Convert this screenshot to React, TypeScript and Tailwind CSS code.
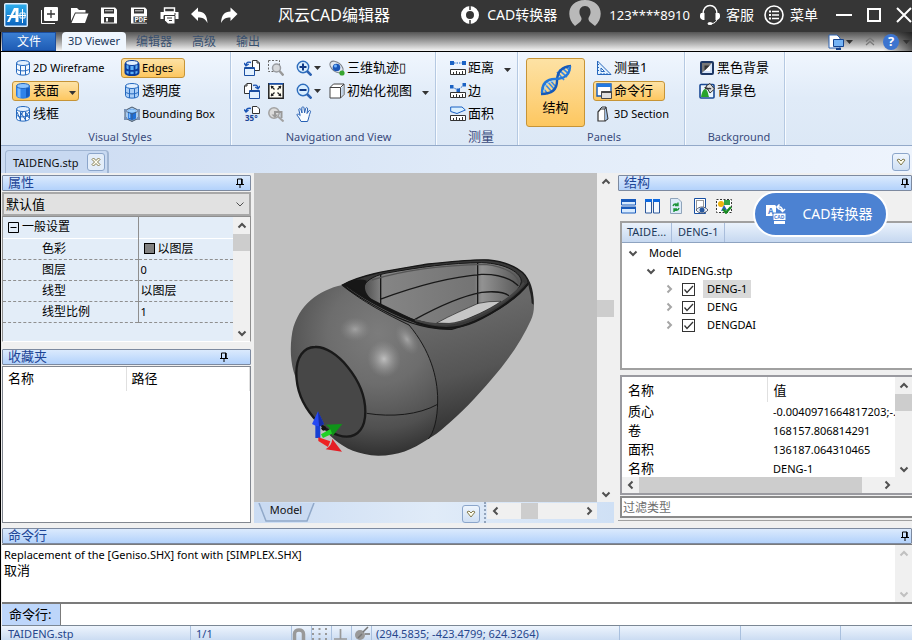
import { useState } from 'react';
import type { ReactNode } from 'react';
import clsx from 'clsx';

type Dir = 'up' | 'down' | 'left' | 'right';

const chevrons: Record<Dir, string> = {
    up: 'M1.5 6.5 L5 3 L8.5 6.5',
    down: 'M1.5 3.5 L5 7 L8.5 3.5',
    left: 'M6.5 1.5 L3 5 L6.5 8.5',
    right: 'M3.5 1.5 L7 5 L3.5 8.5',
};

function Chevron({ dir, color = '#505050', width = 2 }: { dir: Dir; color?: string; width?: number }) {
    return (
        <svg width="10" height="10" viewBox="0 0 10 10" className="shrink-0">
            <path d={chevrons[dir]} fill="none" stroke={color} strokeWidth={width} />
        </svg>
    );
}

function Caret() {
    return (
        <svg width="7" height="4" viewBox="0 0 7 4" className="shrink-0">
            <path d="M0 0 H7 L3.5 4 Z" fill="#333" />
        </svg>
    );
}

function Icon({ children, size = 16 }: { children: ReactNode; size?: number }) {
    return (
        <svg width={size} height={size} viewBox="0 0 16 16" fill="none" className="shrink-0">
            {children}
        </svg>
    );
}

/* ---------- ribbon icons ---------- */

function Cylinder({ kind }: { kind: 'wire' | 'solid' | 'mesh' | 'edges' | 'glass' }) {
    const stroke = kind === 'edges' ? '#0a3c9c' : '#2468be';
    const fill = { wire: '#f4f9ff', solid: '#2f83ea', mesh: '#f4f9ff', edges: '#5fb0f8', glass: '#a9cdf6' }[kind];
    return (
        <Icon>
            <path d="M1.5 3.5 V12.5 C1.5 16 14.5 16 14.5 12.5 V3.5 Z" fill={fill} stroke={kind === 'solid' ? '#2a7be0' : stroke} />
            {kind === 'solid' && <path d="M2.5 5 H5.5 V15 L2.5 13.8 Z" fill="#7dbcff" />}
            {kind === 'solid' && <path d="M11 5 H14.5 V13 L11 14.8 Z" fill="#155bc0" />}
            <ellipse cx="8" cy="3" rx="6.5" ry="2.5" fill={kind === 'solid' ? '#8cc4ff' : '#e2f0ff'} stroke={stroke} />
            {kind !== 'solid' && <path d="M5.5 5.5 V15 M10.5 5.5 V15 M1.5 9 C4 11.5 12 11.5 14.5 9" stroke={stroke} strokeWidth={kind === 'edges' ? 1.8 : 1} />}
            {kind === 'mesh' && <path d="M2 6 L5.5 14 M5.5 6 L10.5 14 M10.5 6 L14 12 M5.5 10 L8 6 M10.5 11 L14 6" stroke={stroke} />}
            {kind === 'edges' && <path d="M1.5 3.5 V12.5 C1.5 16 14.5 16 14.5 12.5 V3.5" stroke={stroke} strokeWidth="2" />}
        </Icon>
    );
}

function BoundingBoxIcon() {
    return (
        <Icon>
            <path d="M1 4.5 L8 1 L15 4.5 V12 L8 15.5 L1 12 Z" fill="#a7caee" stroke="#47576a" />
            <path d="M4 5 C4 2.5 12 2.5 12 5 V12 C12 14.5 4 14.5 4 12 Z" fill="#1f70d8" />
            <ellipse cx="8" cy="5" rx="4" ry="1.7" fill="#9cd0ff" />
            <path d="M5.5 7 V12" stroke="#84bfff" strokeWidth="1.5" />
            <path d="M1 5 L8 8 L15 5 M8 8 V15" stroke="#47576a" strokeWidth=".7" />
            <path d="M0 3 h3 v3 H0z M13 3 h3 v3 h-3z M0 11 h3 v3 H0z M13 11 h3 v3 h-3z" fill="#7891b4" />
        </Icon>
    );
}

function RotateIcon({ kind }: { kind: 'left' | 'right' | 'angle' }) {
    if (kind === 'angle') {
        return (
            <Icon>
                <path d="M8.5 .5 H13 L15.5 3 V7.5 H8.5 Z" fill="#fff" stroke="#333" />
                <path d="M7 2.5 C4 1.5 2 3 2 5.5 M0 3.5 L2 6 L4.5 4" stroke="#1b55b5" strokeWidth="1.4" />
                <text x="1" y="15" fontSize="8" fontWeight="700" fill="#1d4698">35°</text>
            </Icon>
        );
    }
    return (
        <Icon>
            <g transform={kind === 'right' ? 'matrix(-1 0 0 1 16 0)' : undefined}>
                <path d="M8.5 .5 H13 L15.5 3 V10.5 H8.5 Z" fill="#fff" stroke="#333" />
                <path d="M13 .5 V3 H15.5" stroke="#333" />
                <path d="M.5 7.5 H10.5 V15.5 H.5 Z" fill="#e3f1ff" stroke="#1b4fa2" />
                <path d="M.5 8.5 H10.5" stroke="#1b4fa2" />
                <path d="M7 2.5 C4 1.5 2.5 2.5 2 5 M0 3 L2 5.8 L4.8 4" stroke="#1b55b5" strokeWidth="1.4" />
            </g>
        </Icon>
    );
}

function ZoomIcon({ kind }: { kind: 'in' | 'out' | 'window' | 'previous' }) {
    if (kind === 'window') {
        return (
            <Icon>
                <path d="M.5 .5 H11.5 V11.5 H.5 Z" stroke="#666" strokeDasharray="2 1.5" />
                <circle cx="8.5" cy="8" r="4" fill="#d5d7da" stroke="#9a9da2" strokeWidth="1.5" />
                <path d="M11.5 11 L15.5 15.5" stroke="#999" strokeWidth="2.4" />
            </Icon>
        );
    }
    if (kind === 'previous') {
        return (
            <Icon>
                <circle cx="6" cy="7" r="5.2" fill="#dcdcdc" stroke="#a2a2a2" strokeWidth="1.5" />
                <path d="M7 11 V6 H13.5 V12" stroke="#999" strokeWidth="2" />
                <path d="M3.5 8.5 H10 L7 12 Z" fill="#999" />
                <path d="M10 10.5 L15.5 15.5" stroke="#a2a2a2" strokeWidth="2" />
            </Icon>
        );
    }
    return (
        <Icon>
            <circle cx="7" cy="7" r="5.7" fill="#d9eeff" stroke="#2e6dbd" strokeWidth="1.4" />
            <path d={kind === 'in' ? 'M3.5 7 H10.5 M7 3.5 V10.5' : 'M3.5 7 H10.5'} stroke="#123a85" strokeWidth="2" />
            <path d="M11 11 L15.5 15.5" stroke="#2c62b2" strokeWidth="2.6" />
        </Icon>
    );
}

function ExtentsIcon() {
    return (
        <Icon>
            <path d="M.8 .8 H15.2 V15.2 H.8 Z" fill="#fffdf2" stroke="#222" strokeWidth="1.5" />
            <path d="M.8 .8 H15.2" stroke="#1b55b5" strokeWidth="1.5" />
            <path d="M3 3 L6.5 6.5 M13 3 L9.5 6.5 M3 13 L6.5 9.5 M13 13 L9.5 9.5" stroke="#222" strokeWidth="1.3" />
            <path d="M3 3 H6 L3 6 Z M13 3 H10 L13 6 Z M3 13 H6 L3 10 Z M13 13 H10 L13 10 Z" fill="#222" />
        </Icon>
    );
}

function HandIcon() {
    return (
        <Icon>
            <path
                d="M5 15.5 C4 13 2.5 11 .8 8.8 C1.3 7.4 3 8.2 4.2 9.6 L2.8 3.6 C3 2.3 4.6 2.4 5 3.7 L6 7 L5.8 1.8 C6.2 .4 7.8 .5 8 1.8 L8.6 6.8 L9.7 2.3 C10.3 1.1 11.8 1.6 11.6 3 L11 7.5 L12.8 4.9 C13.8 4 15 4.9 14.4 6.2 C13 9.2 13 12 11.5 15.5 Z"
                fill="#f8fcff"
                stroke="#2861b4"
            />
        </Icon>
    );
}

function OrbitIcon() {
    return (
        <Icon>
            <ellipse cx="7.5" cy="7" rx="7.5" ry="4.6" transform="rotate(38 7.5 7)" fill="#dfe6ef" stroke="#7a7f88" />
            <circle cx="7.5" cy="7.5" r="3.8" fill="#1a56b6" />
            <circle cx="6.5" cy="6" r="1.5" fill="#6fb4ff" />
            <circle cx="13" cy="13" r="2.6" fill="#37a52f" />
        </Icon>
    );
}

function CubeIcon() {
    return (
        <Icon>
            <path d="M1 4.5 L4.5 1 H15 V11.5 L11.5 15 H1 Z" fill="#fff" stroke="#444" />
            <path d="M1 4.5 H11.5 V15 M11.5 4.5 L15 1" stroke="#444" />
            <path d="M12.2 5 L14.5 2.5 V11 L12.2 13.5 Z" fill="#bcd0e6" />
        </Icon>
    );
}

function MeasureIcon({ kind }: { kind: 'distance' | 'edge' | 'area' }) {
    return (
        <Icon>
            <path d="M.5 9.5 H15.5 V14.5 H.5 Z" fill="#fff" stroke="#333" />
            <path d="M3.5 12 V14 M6.5 11 V14 M9.5 12 V14 M12.5 11 V14" stroke="#333" />
            {kind === 'distance' && <path d="M0 1 h4 v4 H0z M12 1 h4 v4 h-4z" fill="#1b62c4" />}
            {kind === 'distance' && <path d="M4 3 H12" stroke="#1b62c4" strokeDasharray="1.5 1" />}
            {kind === 'edge' && <path d="M0 2 h3.5 v3.5 H0z M6.5 5.5 H10 V9 H6.5z M12.5 0 H16 V3.5 h-3.5z" fill="#1b62c4" />}
            {kind === 'edge' && <path d="M2 4 L8 7 L14 2" stroke="#1b62c4" strokeDasharray="1.5 1.2" />}
            {kind === 'area' && <path d="M.7 1 H12 L15.3 4 L7 7.5 L.7 5.5 Z" fill="#d9efff" stroke="#1b62c4" />}
        </Icon>
    );
}

function DnaIcon() {
    return (
        <svg width="32" height="32" viewBox="0 0 32 32" fill="none">
            <path d="M4 19 L12 28 M7 17 L15 26 M10 16 L16 23 M17 8 L24 16 M19 6 L27 13 M22 4 L29 10 M2 23 L8 30 M26 3 L30 7" stroke="#3c8ce6" strokeWidth="1.7" />
            <path d="M1 30 C14 30 17 24 17 17 C17 9 20 3 31 2" stroke="#1559b8" strokeWidth="2.4" />
            <path d="M2 29 C2 17 9 15 15 15 C24 15 30 11 30 2" stroke="#2378da" strokeWidth="2.4" />
            <path d="M4 27 C5 19 10 17 15 17" stroke="#9bd3ff" />
        </svg>
    );
}

function RulerTriangleIcon() {
    return (
        <Icon>
            <path d="M1.5 1 V14.5 H15 Z" fill="#e1f1ff" stroke="#2767bc" />
            <path d="M5 8 V11.5 H8.5 Z" fill="#fff" stroke="#2767bc" />
            <path d="M1.5 4.5 H3 M1.5 7.5 H3 M1.5 10.5 H3 M5 14.5 V13 M8 14.5 V13 M11 14.5 V13" stroke="#2767bc" />
        </Icon>
    );
}

function CommandIcon() {
    return (
        <Icon>
            <path d="M1 1 H15 V13 H1 Z" fill="#fff" stroke="#1559b4" strokeWidth="1.4" />
            <path d="M1 1 H15 V4 H1 Z" fill="#2279e2" />
            <path d="M5.5 8.5 H15.5 V15.5 H5.5 Z" fill="#dedede" stroke="#474747" />
            <path d="M5.5 9 H15.5" stroke="#474747" strokeWidth="2" />
        </Icon>
    );
}

function SectionIcon() {
    return (
        <Icon>
            <path d="M2 6 L4.5 3 H9 V15 H2 Z" fill="#fff" stroke="#333" strokeWidth="1.2" />
            <path d="M9 3 L10 1 L12 13 L9 15" fill="#9ebce0" stroke="#333" />
            <path d="M4 3 L6 1 H10" stroke="#333" />
        </Icon>
    );
}

function BlackBackgroundIcon() {
    return (
        <Icon>
            <rect x="2" y="2" width="12" height="12" rx="1" fill="#d5e4fa" stroke="#1d3764" strokeWidth="2" />
            <path d="M3 3 H13 L3 13 Z" fill="#777" />
            <path d="M5.5 5.5 H11 L5.5 11 Z" fill="#333" />
            <path d="M11 5.5 V11 H5.5 Z" fill="#fff" />
        </Icon>
    );
}

function BackgroundColorIcon() {
    return (
        <Icon>
            <rect x="1" y="1.5" width="14" height="13.5" rx="1" fill="#eaf5ff" stroke="#1a4994" strokeWidth="1.6" />
            <path d="M2 14 C3 8 5 6 6 6 C9 7 9 11 10 14 Z" fill="#28a32c" />
            <path d="M7 3 L11 .5 L15.5 6 L11 10 Z" fill="#ddd" stroke="#333" />
            <path d="M6 4 C7 8 10 4 12 6" stroke="#333" strokeWidth="1.5" />
        </Icon>
    );
}

/* ---------- title bar icons ---------- */

function LogoIcon() {
    return (
        <svg width="24" height="24" viewBox="0 0 24 24" fill="none" className="shrink-0">
            <defs>
                <linearGradient id="logo" x1="0" y1="0" x2="0" y2="1">
                    <stop offset="0" stopColor="#2fb0ee" />
                    <stop offset="1" stopColor="#0a62bd" />
                </linearGradient>
            </defs>
            <rect x=".7" y=".7" width="22.6" height="22.6" rx="1" fill="url(#logo)" stroke="#dcecfb" strokeWidth="1.4" />
            <path d="M3 19 L10 5 H14.5 V19 H11.5 V15 H7.5 L5.5 19 Z M9 12 H11.5 V7.5 Z" fill="#fff" fillRule="evenodd" />
            <path d="M18.5 6 V20 M3 12.5 H22 M16 10 H21 V15 H16 Z" stroke="#fff" />
        </svg>
    );
}

const quickActions: { label: string; icon: ReactNode }[] = [
    {
        label: '新建',
        icon: (
            <>
                <rect x="4" y="1" width="14" height="14" rx="1" fill="#fff" />
                <path d="M1.5 4 V17.5 H15" stroke="#fff" />
                <path d="M11 4 V12 M7 8 H15" stroke="#363636" strokeWidth="1.3" />
            </>
        ),
    },
    {
        label: '打开',
        icon: (
            <>
                <path d="M1 15 V2 H7 L9 4 H15.5 V6.5 H5 Z" fill="#fff" />
                <path d="M5.5 7.5 H18.5 L15 17 H1.5 Z" fill="#fff" />
            </>
        ),
    },
    {
        label: '保存',
        icon: (
            <>
                <path d="M1 1.5 H15 L17 3.5 V17.5 H1 Z" fill="#fff" />
                <path d="M4 3 H14 V7.5 H4 Z M4 11 H14 V16.5 H4 Z" fill="#363636" />
                <path d="M5 4.8 H13" stroke="#fff" strokeWidth=".8" />
                <path d="M6 12 H8 V15.5 H6 Z" fill="#fff" />
            </>
        ),
    },
    {
        label: '导出 PDF',
        icon: (
            <>
                <path d="M1 1.5 H15 L17 3.5 V17.5 H1 Z" fill="#fff" />
                <path d="M4 3 H14 V7.5 H4 Z M3.5 10.5 H18 V16.8 H3.5 Z" fill="#363636" />
                <path d="M5 4.8 H13" stroke="#fff" strokeWidth=".8" />
                <text x="4.5" y="16.2" fontSize="7" fontWeight="700" fill="#fff" fontFamily="Liberation Mono">PDF</text>
            </>
        ),
    },
    {
        label: '打印',
        icon: (
            <>
                <path d="M4.5 2 H14.5 V6 H4.5 Z" stroke="#fff" strokeWidth="1.4" />
                <path d="M.5 6 H18.5 V13 H15.5 V9.5 H3.5 V13 H.5 Z" fill="#fff" />
                <path d="M5 10 H14.5 V17.5 H8 L5 14.5 Z" fill="#fff" />
                <path d="M14 8 H16 M4 9.5 H15" stroke="#363636" />
                <path d="M7 12 H12 M9 14.5 H12" stroke="#363636" />
            </>
        ),
    },
    { label: '撤销', icon: <path d="M1 8 L8 1.5 V5.5 C14 5.5 17 9 17.5 17 C15 12.5 12.5 11.5 8 11.5 V15 Z" fill="#fff" /> },
    { label: '重做', icon: <path d="M17.5 8 L10.5 1.5 V5.5 C4.5 5.5 1.5 9 1 17 C3.5 12.5 6 11.5 10.5 11.5 V15 Z" fill="#fff" /> },
];

function TitleBar() {
    return (
        <header className="flex h-8 shrink-0 items-center bg-[#363636] pb-0.5 pl-1 text-white">
            <LogoIcon />
            <div className="flex pl-1.5">
                {quickActions.map((action) => (
                    <button key={action.label} aria-label={action.label} className="flex h-7 w-[30px] items-center justify-center">
                        <svg width="19" height="19" viewBox="0 0 19 19" fill="none">
                            {action.icon}
                        </svg>
                    </button>
                ))}
            </div>
            <h1 className="ml-[34px] whitespace-nowrap text-base">风云CAD编辑器</h1>
            <div className="ml-auto flex h-full items-center whitespace-nowrap text-sm">
                <button className="flex items-center gap-2">
                    <svg width="18" height="18" viewBox="0 0 18 18" fill="none">
                        <circle cx="9" cy="9" r="6.5" stroke="#fff" strokeWidth="5" />
                        <path d="M9 0 V4 M9 14 V18" stroke="#363636" strokeWidth="1.5" />
                    </svg>
                    CAD转换器
                </button>
                <button className="ml-3 flex h-full items-center gap-2 text-[13px]">
                    <svg width="32" height="28" viewBox="0 0 32 28" fill="none" className="self-start">
                        <path d="M6 26 L11 22 C13 20 13 18 11.5 16 C9.5 13 10 6 16 6 C22 6 22.5 13 20.5 16 C19 18 19 20 21 22 L26 26 C36 17 33 0 16 0 C-1 0 -4 17 6 26 Z" fill="#b9b9b9" />
                    </svg>
                    123****8910
                </button>
                <button className="ml-2.5 flex items-center gap-1.5">
                    <svg width="20" height="22" viewBox="0 0 20 22" fill="none">
                        <path d="M3 10 C3 -1.5 17 -1.5 17 10" stroke="#fff" strokeWidth="1.5" />
                        <path d="M1 9 H4.5 V16 C1 16 0 14 0 12.5 C0 11 0 10 1 9 Z M19 9 H15.5 V16 C19 16 20 14 20 12.5 C20 11 20 10 19 9 Z" fill="#fff" />
                        <path d="M17 15 C16.5 18 14 19.5 11.5 19.5" stroke="#fff" />
                        <ellipse cx="10" cy="19.5" rx="2.5" ry="1.5" fill="#fff" />
                    </svg>
                    客服
                </button>
                <button className="ml-2.5 flex items-center gap-1.5">
                    <svg width="20" height="20" viewBox="0 0 20 20" fill="none">
                        <circle cx="10" cy="10" r="9" stroke="#fff" strokeWidth="1.6" />
                        <path d="M8 6.5 H15 M8 10 H15 M8 13.5 H15" stroke="#fff" strokeWidth="1.6" />
                        <path d="M5 6.5 H7 M5 10 H7 M5 13.5 H7" stroke="#fff" strokeWidth="2" />
                    </svg>
                    菜单
                </button>
                <button aria-label="最小化" className="ml-[18px]">
                    <svg width="16" height="16" viewBox="0 0 16 16"><path d="M0 7 H16 V9 H0 Z" fill="#fff" /></svg>
                </button>
                <button aria-label="最大化" className="ml-3.5">
                    <svg width="16" height="16" viewBox="0 0 16 16"><rect x="2" y="2" width="12" height="12" fill="none" stroke="#fff" strokeWidth="2" /></svg>
                </button>
                <button aria-label="关闭" className="ml-3.5">
                    <svg width="16" height="16" viewBox="0 0 16 16"><path d="M1 1 L15 15 M15 1 L1 15" stroke="#fff" strokeWidth="2" /></svg>
                </button>
            </div>
        </header>
    );
}

function RibbonTabs() {
    return (
        <nav className="flex h-5 shrink-0 items-stretch border-b border-black bg-gradient-to-b from-[#555] to-[#f6f6f6] pl-px text-xs">
            <button className="w-[54px] border border-[#1c4d9c] bg-gradient-to-b from-[#3b7fd2] to-[#1f5cb5] text-xs leading-4 text-white">文件</button>
            <button className="ml-1.5 rounded-t-sm bg-[#eff6fe] px-1.5 text-[11px] text-[#1e395b]">3D Viewer</button>
            {['编辑器', '高级', '输出'].map((tab) => (
                <button key={tab} className="mx-2.5 text-[#39506f]">{tab}</button>
            ))}
            <div className="ml-auto flex items-center">
                <button aria-label="界面样式" className="flex items-center gap-0.5">
                    <Icon>
                        <path d="M1 1 H9 L12 4 V14 H1 Z" fill="#fff" stroke="#2c62b2" />
                        <path d="M5.5 5.5 H15.5 V12.5 H5.5 Z" fill="#75b4f6" stroke="#15448e" />
                        <path d="M8 15 H13" stroke="#15448e" strokeWidth="2" />
                    </Icon>
                    <Caret />
                </button>
                <button aria-label="折叠功能区" className="ml-3">
                    <svg width="10" height="9" viewBox="0 0 10 9" fill="none">
                        <path d="M1 4.5 L5 1 L9 4.5 M1 8 L5 4.5 L9 8" stroke="#777" strokeWidth="1.2" />
                    </svg>
                </button>
                <button aria-label="帮助" className="ml-2 flex items-center gap-1 self-stretch bg-gradient-to-r from-transparent to-black/60 pr-0.5">
                    <span className="flex size-4 items-center justify-center rounded-full bg-[#3c74cf] text-[13px] font-bold text-white">?</span>
                    <Caret />
                </button>
            </div>
        </nav>
    );
}

/* ---------- ribbon ---------- */

const activeButton = 'border-[#c69437] bg-gradient-to-b from-[#fde2a4] to-[#fdc75f]';

type RibbonButtonProps = { icon: ReactNode; label: string; active?: boolean; caret?: boolean; className?: string };

function RibbonButton({ icon, label, active, caret, className }: RibbonButtonProps) {
    return (
        <button className={clsx('flex h-5 items-center gap-0.5 whitespace-nowrap rounded-[3px] border px-0.5 text-black', active ? activeButton : 'border-transparent', className)}>
            {icon}
            <span className={/^[\x00-\x7f]+$/.test(label) ? 'text-[11px]' : 'text-[13px]'}>{label}</span>
            {caret && <span className="ml-2 mt-1"><Caret /></span>}
        </button>
    );
}

function ToolButton({ icon, label, caret }: { icon: ReactNode; label: string; caret?: boolean }) {
    return (
        <button aria-label={label} className="flex h-5 items-center gap-0.5">
            {icon}
            {caret && <Caret />}
        </button>
    );
}

function RibbonGroup({ label, className, children }: { label: string; className: string; children: ReactNode }) {
    return (
        <section className={clsx('flex shrink-0 flex-col border-r border-[#b5c9e2] shadow-[1px_0_0_#f8fbff]', className)}>
            <div className="flex grow items-start pt-1.5">{children}</div>
            <h2 className="flex h-[18px] items-center justify-center pr-0.5 pt-0.5 text-[11px] text-[#3a4b7c]">
                <span className={label === '测量' ? 'text-[13px]' : ''}>{label}</span>
            </h2>
        </section>
    );
}

const column = 'flex flex-col items-start gap-[3px]';

function Ribbon() {
    return (
        <div className="flex h-[94px] shrink-0 border-b border-[#93a9c9] bg-gradient-to-b from-[#f0f6fe] via-[#e0ebf8] to-[#dce8f6]">
            <RibbonGroup label="Visual Styles" className="w-[230px] pl-[11px]">
                <div className={clsx(column, 'w-[109px]')}>
                    <RibbonButton icon={<Cylinder kind="wire" />} label="2D Wireframe" />
                    <RibbonButton icon={<Cylinder kind="solid" />} label="表面" active caret />
                    <RibbonButton icon={<Cylinder kind="mesh" />} label="线框" />
                </div>
                <div className={column}>
                    <RibbonButton icon={<Cylinder kind="edges" />} label="Edges" active className="w-16" />
                    <RibbonButton icon={<Cylinder kind="glass" />} label="透明度" />
                    <RibbonButton icon={<BoundingBoxIcon />} label="Bounding Box" />
                </div>
            </RibbonGroup>
            <RibbonGroup label="Navigation and View" className="w-[205px] pl-[13px]">
                <div className={clsx(column, 'w-6')}>
                    <ToolButton icon={<RotateIcon kind="left" />} label="向左旋转" />
                    <ToolButton icon={<RotateIcon kind="right" />} label="向右旋转" />
                    <ToolButton icon={<RotateIcon kind="angle" />} label="旋转角度" />
                </div>
                <div className={clsx(column, 'w-7')}>
                    <ToolButton icon={<ZoomIcon kind="window" />} label="窗口缩放" />
                    <ToolButton icon={<ExtentsIcon />} label="适合窗口" />
                    <ToolButton icon={<ZoomIcon kind="previous" />} label="上一视图" />
                </div>
                <div className={clsx(column, 'w-[30px]')}>
                    <ToolButton icon={<ZoomIcon kind="in" />} label="放大" caret />
                    <ToolButton icon={<ZoomIcon kind="out" />} label="缩小" caret />
                    <ToolButton icon={<HandIcon />} label="平移" />
                </div>
                <div className={column}>
                    <RibbonButton icon={<OrbitIcon />} label="三维轨迹▯" />
                    <RibbonButton icon={<CubeIcon />} label="初始化视图" caret />
                </div>
            </RibbonGroup>
            <RibbonGroup label="测量" className="w-[82px] pl-[11px]">
                <div className={column}>
                    <RibbonButton icon={<MeasureIcon kind="distance" />} label="距离" caret />
                    <RibbonButton icon={<MeasureIcon kind="edge" />} label="边" />
                    <RibbonButton icon={<MeasureIcon kind="area" />} label="面积" />
                </div>
            </RibbonGroup>
            <RibbonGroup label="Panels" className="w-[167px] pl-2">
                <button className={clsx('mr-2 flex h-[69px] w-[59px] flex-col items-center justify-center gap-0.5 rounded-[3px] border pb-1 text-[13px]', activeButton)}>
                    <DnaIcon />
                    结构
                </button>
                <div className={column}>
                    <RibbonButton icon={<RulerTriangleIcon />} label="测量1" />
                    <RibbonButton icon={<CommandIcon />} label="命令行" active className="w-[72px]" />
                    <RibbonButton icon={<SectionIcon />} label="3D Section" />
                </div>
            </RibbonGroup>
            <RibbonGroup label="Background" className="w-[100px] pl-[11px]">
                <div className={column}>
                    <RibbonButton icon={<BlackBackgroundIcon />} label="黑色背景" />
                    <RibbonButton icon={<BackgroundColorIcon />} label="背景色" />
                </div>
            </RibbonGroup>
        </div>
    );
}

function DropButton({ label }: { label: string }) {
    return (
        <button aria-label={label} className="flex size-[18px] items-center justify-center rounded-[3px] border border-[#8ba5ca] bg-gradient-to-b from-[#eef5fd] to-[#cfdff3]">
            <svg width="10" height="8" viewBox="0 0 10 8" fill="none">
                <path d="M1 2 L3 1 L5 3 L7 1 L9 2 L5 7 Z" fill="#fffef0" stroke="#837b50" />
            </svg>
        </button>
    );
}

function DocumentTabs() {
    return (
        <div className="flex h-[27px] shrink-0 items-center justify-between bg-gradient-to-r from-[#cbdbf2] via-[#dfeaf8] to-[#eef4fd] pl-1 pr-0.5 pt-1">
            <div className="flex h-[23px] items-center gap-2 rounded-t-sm border border-b-0 border-r-2 border-[#a1b6d3] bg-[#c8d9f1] pl-[7px] pr-0.5">
                <button className="pt-0.5 text-[11px] text-[#111]">TAIDENG.stp</button>
                <button aria-label="关闭文档" className="flex size-[18px] items-center justify-center rounded-[3px] border border-[#8ba5ca] bg-[#e3edf9]">
                    <svg width="10" height="10" viewBox="0 0 10 10" fill="none">
                        <path d="M1 2.5 L2.5 1 L5 3.5 L7.5 1 L9 2.5 L6.5 5 L9 7.5 L7.5 9 L5 6.5 L2.5 9 L1 7.5 L3.5 5 Z" fill="#fffef0" stroke="#837b50" />
                    </svg>
                </button>
            </div>
            <DropButton label="文档列表" />
        </div>
    );
}

/* ---------- shared panel parts ---------- */

function PanelHeader({ title, pinClass = 'mr-1.5' }: { title: string; pinClass?: string }) {
    return (
        <div className="flex h-4 shrink-0 items-center justify-between rounded-[1px] border border-[#7d8aa0] bg-gradient-to-b from-[#dbeafd] to-[#b3d2fb] pl-[5px]">
            <h2 className="pb-0.5 text-[13px] leading-[14px] text-[#1d4596]">{title}</h2>
            <button aria-label={`固定${title}`} className={pinClass}>
                <svg width="8" height="10" viewBox="0 0 8 10" fill="none">
                    <path d="M1.5 6 V1 H6 V6 M0 6.5 H8 M4 6 V10" stroke="#000" />
                    <path d="M5 1 V6 H6.5 V1 Z" fill="#000" />
                </svg>
            </button>
        </div>
    );
}

function ScrollBar({ horizontal, before, size, color }: { horizontal?: boolean; before?: string; size?: string; color?: string }) {
    return (
        <div className={clsx('flex shrink-0 bg-[#f0f0f0]', horizontal ? 'h-4' : 'w-[17px] flex-col')}>
            <button aria-label={horizontal ? '向左滚动' : '向上滚动'} className={clsx('flex shrink-0 items-center justify-center', horizontal ? 'w-[17px]' : 'h-[17px]')}>
                <Chevron dir={horizontal ? 'left' : 'up'} color={color} />
            </button>
            <div className={clsx('flex min-h-0 min-w-0 grow', !horizontal && 'flex-col')}>
                <div className={before} />
                {size && <div className={clsx('bg-[#cdcdcd]', size)} />}
            </div>
            <button aria-label={horizontal ? '向右滚动' : '向下滚动'} className={clsx('flex shrink-0 items-center justify-center', horizontal ? 'w-[17px]' : 'h-[17px]')}>
                <Chevron dir={horizontal ? 'right' : 'down'} color={color} />
            </button>
        </div>
    );
}

/* ---------- left column ---------- */

const properties = [
    { name: '色彩', value: '以图层', swatch: true },
    { name: '图层', value: '0' },
    { name: '线型', value: '以图层' },
    { name: '线型比例', value: '1' },
];

function PropertiesPanel() {
    return (
        <section className="flex shrink-0 flex-col">
            <PanelHeader title="属性" />
            <div className="mt-px grid h-6 items-center border-2 border-[#a8a8a8] bg-[#e1e1e1]">
                <select aria-label="选择对象" className="col-start-1 row-start-1 h-5 w-full appearance-none pl-0.5 text-[13px] leading-[19px]">
                    <option>默认值</option>
                </select>
                <span className="pointer-events-none col-start-1 row-start-1 mr-1 justify-self-end">
                    <Chevron dir="down" width={1} />
                </span>
            </div>
            <div className="flex h-[126px] border border-[#8f8f8f] border-b-white bg-[#e3edf8]">
                <div className="grow">
                    <table className="w-full table-fixed border-collapse text-xs leading-4">
                        <colgroup>
                            <col className="w-[135px]" />
                            <col />
                        </colgroup>
                        <tbody>
                            <tr className="h-[21px] border-b border-white">
                                <th className="border-r border-[#8f8f8f] p-0 text-left font-normal">
                                    <button className="flex items-center gap-[3px] pl-[5px]">
                                        <svg width="11" height="11" viewBox="0 0 11 11" fill="none">
                                            <path d="M.5 .5 H10.5 V10.5 H.5 Z M2.5 5.5 H8.5" stroke="#000" />
                                        </svg>
                                        一般设置
                                    </button>
                                </th>
                                <td />
                            </tr>
                            {properties.map((p) => (
                                <tr key={p.name} className="h-[21px] border-b border-dashed border-[#8f8f8f]">
                                    <th className="border-r border-solid border-[#8f8f8f] py-0 pl-[39px] pr-0 text-left font-normal">{p.name}</th>
                                    <td className="py-0 pl-0.5">
                                        <span className={clsx('flex items-center gap-[3px]', /^\d+$/.test(p.value) && 'text-[11px]')}>
                                            {p.swatch && <span className="ml-[3px] size-[11px] border border-black bg-[#808080]" />}
                                            {p.value}
                                        </span>
                                    </td>
                                </tr>
                            ))}
                        </tbody>
                    </table>
                </div>
                <ScrollBar size="h-[17px]" />
            </div>
        </section>
    );
}

function FavoritesPanel() {
    return (
        <section className="mt-[7px] flex min-h-0 grow flex-col">
            <PanelHeader title="收藏夹" pinClass="mr-[22px]" />
            <div className="mt-px grow border border-[#828790] bg-white">
                <table className="w-full table-fixed text-[13px] leading-4">
                    <thead>
                        <tr className="h-6">
                            <th className="w-[123px] border-r border-[#e0e0e0] p-0 pb-0.5 pl-[5px] text-left font-normal">名称</th>
                            <th className="border-r border-[#e0e0e0] p-0 pb-0.5 pl-[5px] text-left font-normal">路径</th>
                        </tr>
                    </thead>
                </table>
            </div>
        </section>
    );
}

/* ---------- drawing area ---------- */

function LampModel() {
    return (
        <svg viewBox="0 0 1029 987" className="min-h-0 w-full grow bg-[#c0c0c0]" fill="none" role="img" aria-label="TAIDENG.stp">
            <defs>
                <linearGradient id="body" x1="600" y1="230" x2="690" y2="560" gradientUnits="userSpaceOnUse">
                    <stop offset="0" stopColor="#686868" />
                    <stop offset=".5" stopColor="#555" />
                    <stop offset="1" stopColor="#303030" />
                </linearGradient>
                <radialGradient id="ball" cx="370" cy="280" r="380" gradientUnits="userSpaceOnUse">
                    <stop offset="0" stopColor="#7c7c7c" />
                    <stop offset=".4" stopColor="#6d6d6d" />
                    <stop offset=".75" stopColor="#505050" />
                    <stop offset="1" stopColor="#2c2c2c" />
                </radialGradient>
                <linearGradient id="inner" x1="325" y1="100" x2="800" y2="100" gradientUnits="userSpaceOnUse">
                    <stop offset="0" stopColor="#4c4c4c" />
                    <stop offset=".12" stopColor="#858585" />
                    <stop offset=".7" stopColor="#747474" />
                    <stop offset=".75" stopColor="#929292" />
                    <stop offset="1" stopColor="#555" />
                </linearGradient>
                <radialGradient id="shine">
                    <stop offset="0" stopColor="#ccc" stopOpacity=".85" />
                    <stop offset="1" stopColor="#999" stopOpacity="0" />
                </radialGradient>
            </defs>
            <g transform="translate(3 201)">
                <path d="M262 135 C330 98 430 88 520 72 C600 64 660 57 700 60 C760 66 815 95 822 128 C842 175 840 215 828 240 C790 325 730 400 640 495 C590 545 550 580 520 597 L440 560 V260 Z" fill="url(#body)" />
                <path d="M262 135 C320 185 400 225 462 255 C525 330 548 410 548 480 C548 540 535 580 520 597 C470 630 430 647 370 647 C310 645 270 625 240 600 C180 550 140 470 121 410 C106 370 104 320 112 275 C130 195 190 150 262 135 Z" fill="url(#ball)" />
                <ellipse cx="300" cy="268" rx="46" ry="36" fill="url(#shine)" opacity=".6" />
                <ellipse cx="387" cy="357" rx="50" ry="56" transform="rotate(-15 387 357)" fill="url(#shine)" />
                <ellipse cx="456" cy="298" rx="28" ry="50" transform="rotate(-30 456 298)" fill="url(#shine)" opacity=".65" />
                <path d="M262 135 C320 185 400 225 462 255 C525 330 548 410 548 480 C548 540 535 580 520 597 M335 520 C410 532 490 525 548 493" stroke="#181818" strokeWidth="3" />

                <path d="M262 135 C330 98 430 88 520 72 C600 64 660 57 700 60 C770 66 820 100 820 130 C790 175 700 237 590 268 C500 270 430 235 380 208 C330 180 290 160 262 135 Z" fill="#383838" stroke="#171717" strokeWidth="4" />
                <path d="M325 148 C325 125 355 108 390 100 C490 82 590 68 680 68 C755 70 800 100 799 125 C797 150 755 180 730 192 C690 215 640 238 600 251 H525 L470 237 C420 215 330 187 325 148 Z" fill="url(#inner)" stroke="#171717" strokeWidth="3" />
                <path d="M545 249 C590 224 630 208 670 190 Q700 183 738 184 C700 211 650 232 600 251 Z" fill="#c6c6c6" stroke="#222" strokeWidth="2" />
                <path d="M377 103 V192 M668 68 V192 M375 178 C450 150 570 112 680 103 C735 102 770 118 790 137 M480 238 C540 205 610 170 680 157 C720 152 750 158 762 167" stroke="#181818" strokeWidth="4" />
                <path d="M350 120 C460 86 590 75 690 73 C755 80 792 105 792 135" stroke="#555" strokeWidth="4" />
                <path d="M262 135 C290 118 315 115 336 122 C318 150 340 180 392 202 C340 182 290 160 262 135 Z" fill="#171717" />
                <path d="M300 155 C350 185 430 222 482 246" stroke="#171717" strokeWidth="10" />
                <path d="M275 140 C340 190 430 232 482 250" stroke="#777" strokeWidth="2" />
                <path d="M275 137 C340 185 430 228 482 246 C550 272 605 270 660 245 C725 215 790 168 820 130" stroke="#171717" strokeWidth="6" />
                <path d="M480 240 C550 262 605 256 670 226 C725 199 785 162 807 128" stroke="#444" strokeWidth="6" />
                <path d="M815 110 C830 130 837 160 836 194 L830 190 C829 160 820 145 820 130" fill="#222" />

                <path d="M180 321 C240 317 331 420 331 515 C331 562 310 590 275 590 C210 588 124 500 124 400 C124 352 145 322 180 321 Z" fill="#474747" stroke="#191919" strokeWidth="7" />

                <path d="M181 545 H196 V594 H181 Z" fill="#1740d4" />
                <path d="M189 514 L207 552 Q189 565 171 552 Z" fill="#2549f2" />
                <path d="M189 514 L207 552 Q200 558 192 559 Z" fill="#152ca4" />
                <path d="M198 583 L230 565 L238 578 L204 594 Z" fill="#20d024" />
                <path d="M212 554 L262 552 L232 589 Q230 565 212 554 Z" fill="#109419" />
                <path d="M190 592 L226 604 L219 621 L190 603 Z" fill="#ee2222" />
                <path d="M232 597 L261 635 L212 628 Q230 618 232 597 Z" fill="#e51d24" />
                <circle cx="206" cy="565" r="7" fill="#111" />
            </g>
        </svg>
    );
}

function Viewport() {
    return (
        <main className="ml-[3px] flex min-w-0 grow flex-col">
            <div className="flex min-h-0 grow">
                <div className="flex min-w-0 grow flex-col">
                    <LampModel />
                </div>
                <ScrollBar before="h-[110px]" size="h-[17px]" />
            </div>
            <div className="flex h-[21px] shrink-0 bg-gradient-to-r from-[#cbdcf3] via-[#e0ebf8] to-[#cfe0f5]">
                <button className="grid h-[19px] w-16 items-center">
                    <svg width="64" height="19" viewBox="0 0 64 19" fill="none" className="col-start-1 row-start-1">
                        <path d="M5 0 L12 18 H53 L60 0" fill="#c9daf1" stroke="#91a9c9" strokeWidth="1.5" />
                    </svg>
                    <span className="col-start-1 row-start-1 pb-1 text-[11px] leading-4 text-[#111]">Model</span>
                </button>
                <div className="ml-auto mt-[3px]">
                    <DropButton label="布局列表" />
                </div>
                <div className="ml-1 border-l-2 border-dotted border-[#92a4bc]" />
                <div className="ml-px mt-px flex w-[110px] flex-col">
                    <ScrollBar horizontal before="w-[17px]" size="w-[17px]" />
                </div>
                <div className="w-[17px]" />
            </div>
        </main>
    );
}

/* ---------- right column ---------- */

const structureTools: { label: string; icon: ReactNode }[] = [
    {
        label: '水平布局',
        icon: (
            <>
                <path d="M1.5 1.5 H15.5 V7 H1.5 Z M1.5 9.5 H15.5 V15 H1.5 Z" fill="#d8ebff" stroke="#185abb" />
                <path d="M1 1 H16 V4 H1 Z M1 8.5 H16 V11 H1 Z" fill="#185abb" />
            </>
        ),
    },
    {
        label: '垂直布局',
        icon: (
            <>
                <path d="M1.5 1.5 H7.5 V15 H1.5 Z M9.5 1.5 H15.5 V15 H9.5 Z" fill="#f4f9ff" stroke="#2b579a" />
                <path d="M1 1 H8 V4 H1 Z M9 1 H16 V4 H9 Z" fill="#0c68df" />
            </>
        ),
    },
    {
        label: '刷新',
        icon: (
            <>
                <path d="M2.5 .5 H10 L13.5 4 V15.5 H2.5 Z" fill="#ddebf9" stroke="#90a4ba" />
                <path d="M5 8 C6 5 9 6 10 7 M10 4.5 V7.5 H7 M11 10 C10 13 7 12.5 6 11.5 M6 14 V11 H9" stroke="#1c943a" strokeWidth="1.4" />
            </>
        ),
    },
    {
        label: '显示',
        icon: (
            <>
                <path d="M2.5 .5 H13.5 V15.5 H2.5 Z" fill="#fff" stroke="#1850a3" />
                <path d="M4.5 2.5 H11.5 V12.5 H4.5 Z" stroke="#333" strokeDasharray="1 1" />
                <path d="M4 12 C7 8 13 8 16 12 C13 16 7 16 4 12 Z" fill="#e8eef7" stroke="#5a6273" />
                <circle cx="10" cy="12" r="2.5" fill="#27589f" />
            </>
        ),
    },
    {
        label: '选择',
        icon: (
            <>
                <path d="M.5 1.5 H15.5 V14.5 H.5 Z" fill="#fff" stroke="#333" strokeDasharray="2 1.5" />
                <circle cx="5" cy="6" r="3" fill="#edb40f" />
                <path d="M8 2 H14 V7 H8 Z" fill="#31a347" />
                <path d="M5 13 L8 7 L11 12 Z" fill="#2a5fbc" />
                <path d="M7 11 L10 14.5 L15 9" stroke="#168a22" strokeWidth="2.5" />
            </>
        ),
    },
];

function Tree() {
    const [visible, setVisible] = useState<Record<string, boolean>>({ 'DENG-1': true, DENG: true, DENGDAI: true });

    return (
        <ul className="pt-px text-[11px] leading-[18px]">
            <li className="flex h-[18px] items-center gap-[11px] pl-1.5">
                <Chevron dir="down" />
                Model
            </li>
            <li className="flex h-[18px] items-center gap-[11px] pl-6">
                <Chevron dir="down" />
                TAIDENG.stp
            </li>
            {Object.keys(visible).map((part) => (
                <li key={part} className="flex h-[18px] items-center pl-[42px]">
                    <Chevron dir="right" color="#a6a6a6" />
                    <label className="ml-2 flex items-center gap-2">
                        <span className="grid">
                            <input
                                type="checkbox"
                                checked={visible[part]}
                                onChange={() => setVisible({ ...visible, [part]: !visible[part] })}
                                className="col-start-1 row-start-1 size-[13px] appearance-none border border-[#333] bg-white"
                            />
                            {visible[part] && (
                                <svg width="13" height="13" viewBox="0 0 13 13" fill="none" className="pointer-events-none col-start-1 row-start-1">
                                    <path d="M2.5 6.5 L5 9.5 L11 3" stroke="#333" strokeWidth="1.3" />
                                </svg>
                            )}
                        </span>
                        <span className={clsx('px-1', part === 'DENG-1' && 'bg-[#d9d9d9]')}>{part}</span>
                    </label>
                </li>
            ))}
        </ul>
    );
}

const attributes = [
    ['质心', '-0.0040971664817203;-.'],
    ['卷', '168157.806814291'],
    ['面积', '136187.064310465'],
    ['名称', 'DENG-1'],
];

function StructurePanel() {
    return (
        <aside className="relative ml-[3px] flex w-[295px] shrink-0 flex-col pl-px pt-0.5">
            <PanelHeader title="结构" pinClass="mr-0.5" />
            <div className="flex h-[30px] shrink-0 items-center gap-2 pl-0.5">
                {structureTools.map((tool) => (
                    <button key={tool.label} aria-label={tool.label}>
                        <Icon>{tool.icon}</Icon>
                    </button>
                ))}
            </div>
            <div className="ml-0.5 flex min-h-0 grow flex-col border-2 border-r-0 border-[#a0a0a0] bg-white">
                <nav className="flex h-[20px] shrink-0 border-b border-[#8ea3c0] bg-gradient-to-b from-[#eaf2fc] to-[#c6d8f0] text-[11px] text-[#1e395b]">
                    <button className="border-r border-[#a9bddb] px-[5px]">TAIDE...</button>
                    <button className="border-r border-[#a9bddb] px-1.5">DENG-1</button>
                </nav>
                <Tree />
            </div>
            <div className="ml-0.5 mt-[5px] flex h-[120px] shrink-0 flex-col border-2 border-r-0 border-[#9a9aa0] bg-white">
                <div className="flex min-h-0 grow">
                    <div className="min-w-0 grow">
                        <table className="w-full table-fixed border-collapse whitespace-nowrap text-[13px] leading-[19px]">
                            <thead>
                                <tr className="h-[25px]">
                                    <th className="w-[145px] border-r border-[#e0e0e0] p-0 pl-1.5 pt-0.5 text-left font-normal">名称</th>
                                    <th className="p-0 pl-1.5 pt-0.5 text-left font-normal">值</th>
                                </tr>
                            </thead>
                            <tbody>
                                {attributes.map(([name, value]) => (
                                    <tr key={name} className="h-[19px]">
                                        <td className="p-0 pl-1.5">{name}</td>
                                        <td className="p-0 pl-1.5 text-[11px]">{value}</td>
                                    </tr>
                                ))}
                            </tbody>
                        </table>
                    </div>
                    <ScrollBar size="h-[17px]" />
                </div>
                <div className="flex flex-col bg-[#f0f0f0] pr-[17px]">
                    <ScrollBar horizontal size="w-[223px]" />
                </div>
            </div>
            <input aria-label="过滤类型" placeholder="过滤类型" className="ml-0.5 mt-px h-[22px] shrink-0 border-2 border-r-0 border-[#8a8a8a] bg-white pl-px text-xs placeholder:text-[#6d6d6d]" />
            <div className="h-[3px] shrink-0 border-b border-[#a0a0a0]" />
            <div className="h-0.5 shrink-0" />
            <button className="absolute right-6 top-[18px] flex h-[46px] w-[135px] items-center justify-center gap-4 rounded-full border-2 border-white bg-[#4c82d2] pr-0.5 text-sm text-white">
                <svg width="20" height="20" viewBox="0 0 20 20" fill="none">
                    <path d="M0 1 H9 L10 2 V12 H0 Z M8 9 H19 V20 H8 Z" fill="#fff" />
                    <path d="M7 9 H20 V16.5 H7 Z" fill="#fff" stroke="#4c82d2" />
                    <text x="2" y="9.5" fontSize="8" fontWeight="700" fill="#4c82d2">A</text>
                    <text x="8" y="15" fontSize="5" fontWeight="700" fill="#4c82d2">CAD</text>
                    <path d="M11 3 C15 2 16.5 4 16.5 7 M14 5 L16.5 7.5 L19 5 M13.5 .5 L11 3 L13.5 5.5" stroke="#fff" strokeWidth="1.5" />
                </svg>
                CAD转换器
            </button>
        </aside>
    );
}

/* ---------- bottom ---------- */

function CommandPanel() {
    return (
        <section className="mt-[5px] flex shrink-0 flex-col pl-px">
            <PanelHeader title="命令行" pinClass="mr-0.5" />
            <div className="flex h-[60px] border-b-2 border-t border-[#7b7b7b] bg-white">
                <div className="grow pl-0.5 pt-0.5">
                    <p className="text-[11px] leading-[15px]">Replacement of the [Geniso.SHX] font with [SIMPLEX.SHX]</p>
                    <p className="text-[13px] leading-4">取消</p>
                </div>
                <ScrollBar color="#c0c0c0" />
            </div>
            <div className="flex h-[22px] border-b border-[#7b8794]">
                <label htmlFor="command" className="w-[58px] bg-[#bdd6fa] pl-[7px] text-[13px] leading-[21px]">命令行:</label>
                <input id="command" className="min-w-0 grow border-l border-[#7b7b7b] bg-white px-1 text-xs outline-none" />
            </div>
        </section>
    );
}

function StatusBar() {
    const cell = 'shrink-0 border-r border-[#a9c0de]';
    return (
        <footer className="flex h-[14px] shrink-0 overflow-hidden bg-gradient-to-b from-[#edf4fd] to-[#cbdcf2] text-[11px] leading-4 text-[#27478d]">
            <div className={clsx(cell, 'w-[190px] pl-[7px]')}>TAIDENG.stp</div>
            <div className={clsx(cell, 'w-[101px] pl-[5px]')}>1/1</div>
            <button aria-label="对象捕捉" className={clsx(cell, 'w-5 pt-0.5')}>
                <svg width="14" height="14" viewBox="0 0 14 14"><path d="M2.5 14 V6 C2.5 .5 11.5 .5 11.5 6 V14" fill="none" stroke="#999" strokeWidth="3.5" /></svg>
            </button>
            <button aria-label="网格" className={clsx(cell, 'w-5 pt-0.5')}>
                <svg width="16" height="14" viewBox="0 0 16 14"><path d="M0 1 H16 M0 6 H16 M0 11 H16" stroke="#999" strokeWidth="2" strokeDasharray="2 4.5" /></svg>
            </button>
            <button aria-label="正交" className={clsx(cell, 'w-5 pl-0.5 pt-0.5')}>
                <svg width="13" height="14" viewBox="0 0 13 14"><path d="M6.5 1 V11 M0 11 H13" stroke="#999" strokeWidth="1.7" /></svg>
            </button>
            <button aria-label="连接" className={clsx(cell, 'w-5 pl-0.5')}>
                <svg width="17" height="14" viewBox="0 0 17 14" fill="none">
                    <circle cx="6" cy="9" r="5" fill="#999" />
                    <path d="M9 6 L14 1 M11 8 H16 M4 12 L8 8" stroke="#777" strokeWidth="1.5" />
                </svg>
            </button>
            <div className={clsx(cell, 'w-[248px] pl-1')}>(294.5835; -423.4799; 624.3264)</div>
            <div className={clsx(cell, 'w-[121px]')} />
            <div className={clsx(cell, 'w-[100px]')} />
        </footer>
    );
}

export default function App() {
    return (
        <div className="flex h-screen flex-col overflow-hidden bg-[#f0f0f0] font-['Noto_Sans','Noto_Sans_CJK_SC',sans-serif] text-black">
            <TitleBar />
            <div className="flex min-h-0 grow flex-col border-l border-black">
                <RibbonTabs />
                <Ribbon />
                <DocumentTabs />
                <div className="flex min-h-0 grow">
                    <div className="flex w-[250px] shrink-0 flex-col pl-px pt-0.5">
                        <PropertiesPanel />
                        <FavoritesPanel />
                    </div>
                    <Viewport />
                    <StructurePanel />
                </div>
                <CommandPanel />
                <StatusBar />
            </div>
        </div>
    );
}
